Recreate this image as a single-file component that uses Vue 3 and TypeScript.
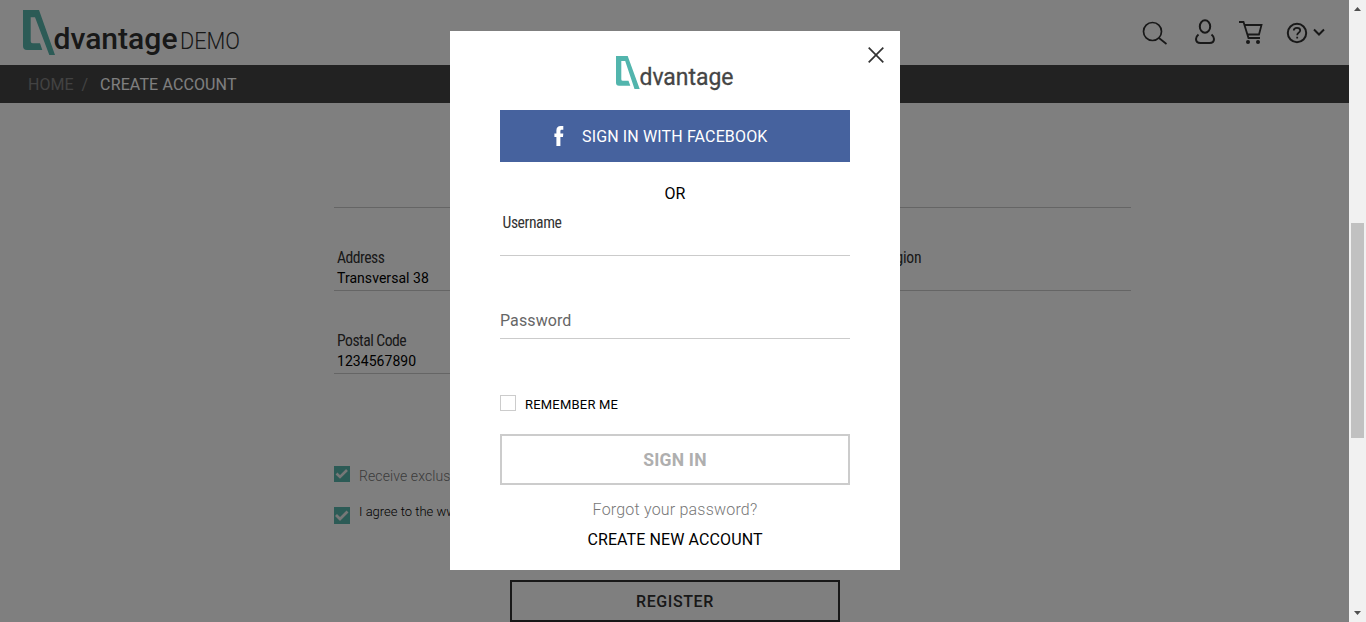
<script setup lang="ts">
import { ref } from 'vue'

interface Field {
  label: string
  value: string
}

const rows: Field[][] = [
  [{ label: '', value: '' }, { label: '', value: '' }],
  [{ label: 'Address', value: 'Transversal 38' }, { label: 'State / Province / Region', value: '' }],
  [{ label: 'Postal Code', value: '1234567890' }],
]

const remember = ref(false)
</script>

<template>
  <div class="window">
    <div class="page">
      <header class="top">
        <svg class="brand" width="230" height="60" viewBox="0 0 230 60">
          <path fill="#58b6ad" d="M3 10H19L35 55H29.300L15 17.300H10.700V41.300Q10.700 43.300 12.700 43.300H20L22.300 50H7Q3 50 3 46Z" />
          <text x="33.5" y="49" class="brand-name" textLength="124" lengthAdjust="spacingAndGlyphs">dvantage</text>
          <text x="160" y="49" class="brand-demo" textLength="60" lengthAdjust="spacingAndGlyphs">DEMO</text>
        </svg>
        <svg class="tools" width="190" height="40" viewBox="0 0 190 40" fill="none" stroke="#303030" stroke-width="2">
          <circle cx="12.5" cy="19.5" r="9" stroke-width="1.7" />
          <path d="M19 26L26.5 32" stroke-width="1.7" />
          <ellipse cx="65" cy="14.5" rx="5.2" ry="6.2" />
          <path d="M58.5 22.5Q56 24.500 56 27Q56 31 60.500 31H69.500Q74 31 74 27Q74 24.500 71.500 22.500" />
          <path d="M99 10H103.500L108.500 26H120M105 13H121.500L119 22.500H108" stroke-width="1.800" />
          <circle cx="108" cy="30" r="2" fill="#303030" stroke="none" />
          <circle cx="118" cy="30" r="2" fill="#303030" stroke="none" />
          <circle cx="157" cy="21" r="9.200" />
          <path d="M153.800 18.500Q153.800 15.800 157 15.800Q160.200 15.800 160.200 18.300Q160.200 19.700 158.600 20.800Q157.200 21.800 157.200 23.200M157.200 24.700V26.500" stroke-width="1.800" />
          <path d="M174 17.500L179 22.500L184 17.500" />
        </svg>
      </header>
      <nav class="crumbs">
        <span class="crumb-home">HOME</span><span class="crumb-sep">/</span><span class="crumb-here">CREATE ACCOUNT</span>
      </nav>
      <main class="form">
        <div v-for="(row, i) in rows" :key="i" class="row">
          <div v-for="(field, j) in row" :key="j" class="field">
            <span class="label">{{ field.label }}</span>
            <span class="value">{{ field.value }}</span>
          </div>
        </div>
        <div class="checks">
          <div class="check">
            <svg class="tick" width="16" height="16" viewBox="0 0 16 16"><rect width="16" height="16" fill="#58b6ad" /><path d="M2.500 7.500L6 11L13 4" fill="none" stroke="#eee" stroke-width="2.600" /></svg>
            <span class="offers">Receive exclusive offers</span>
          </div>
          <div class="check terms">
            <svg class="tick" width="16" height="17" viewBox="0 0 16 17"><rect width="16" height="17" fill="#58b6ad" /><path d="M2 8L6 12L13.500 4.500" fill="none" stroke="#eee" stroke-width="2.800" /></svg>
            <span class="agree">I agree to the www.</span>
          </div>
        </div>
        <button class="register">REGISTER</button>
      </main>
    </div>

    <div class="scroll">
      <svg width="17" height="17" viewBox="0 0 17 17"><path d="M5 11L8.500 7L12 11Z" fill="#505050" /></svg>
      <div class="track"><div class="thumb"></div></div>
      <svg width="17" height="17" viewBox="0 0 17 17"><path d="M5 6L8.500 10L12 6Z" fill="#505050" /></svg>
    </div>

    <div class="overlay">
      <section class="modal">
        <svg class="close" width="16" height="16" viewBox="0 0 16 16"><path d="M.7.7L15.300 15.300M15.300.7L.7 15.300" stroke="#333" stroke-width="1.700" /></svg>
        <svg class="modal-logo" width="120" height="40" viewBox="0 0 120 40">
          <path fill="#52b5ad" d="M1 3H12.700L24.700 36H19.500L10.200 8H6.300V26.200Q6.300 27.700 7.800 27.700H13.500L15.300 32.700H4Q1 32.700 1 29.700Z" />
          <text x="24.500" y="32" class="modal-name" textLength="94" lengthAdjust="spacingAndGlyphs">dvantage</text>
        </svg>
        <button class="facebook">
          <svg width="10" height="20" viewBox="0 0 10 20"><path fill="#fff" d="M2.400 20V11H.4V7.500H2.400V4.500Q2.400 0 6.700 0H9.300V3.700H7.600Q6.400 3.700 6.400 5V7.500H9.300L9 11H6.400V20Z" /></svg>
          <span>SIGN IN WITH FACEBOOK</span>
        </button>
        <p class="or">OR</p>
        <div class="input user"><span class="label">Username</span></div>
        <div class="input pass"><span>Password</span></div>
        <label class="remember" @click="remember = !remember"><span class="box"></span><span class="remember-text">REMEMBER ME</span></label>
        <button class="signin">SIGN IN</button>
        <a class="forgot">Forgot your password?</a>
        <a class="create">CREATE NEW ACCOUNT</a>
      </section>
    </div>
  </div>
</template>

<style>
body { overflow: hidden; }
</style>

<style scoped>
.window { position: relative; display: flex; width: 1366px; height: 622px; overflow: hidden; background: #fff; font-family: Roboto, "Liberation Sans", sans-serif; }
.page { width: 1349px; height: 622px; overflow: hidden; }
.top { display: flex; justify-content: space-between; height: 65px; padding: 0 19px 0 20px; box-sizing: border-box; }
.brand { overflow: visible; }
.brand-name { font-size: 29px; font-weight: 500; fill: #303030; }
.brand-demo { font-size: 23px; font-weight: 300; fill: #303030; }
.tools { margin-top: 12px; }
.crumbs { display: flex; align-items: center; height: 38px; padding-left: 28px; background: #444; color: #fff; font-size: 16px; box-sizing: border-box; white-space: nowrap; }
.crumb-home, .crumb-sep { color: #848484; }
.crumb-sep { margin: 0 12px 0 8px; }
.crumb-here { letter-spacing: .13px; }
.form { width: 797px; margin-left: 334px; padding-top: 22px; box-sizing: border-box; }
.row { display: grid; grid-template-columns: 362px 362px; justify-content: space-between; }
.field { display: flex; flex-direction: column; height: 83px; padding: 40px 0 0 3px; border-bottom: 1px solid #cbcbcb; box-sizing: border-box; }
.label { height: 20px; line-height: 20px; font-size: 15.7px; font-stretch: 75%; font-weight: 400; letter-spacing: -.42px; color: #333; }
.row .label { letter-spacing: -.52px; }
.row .field:nth-child(2) .label { letter-spacing: -.2px; }
.value { height: 21px; line-height: 21px; font-size: 14px; letter-spacing: .05px; color: #000; }
.checks { display: flex; flex-direction: column; padding-top: 92px; }
.check { display: flex; height: 20px; line-height: 20px; white-space: nowrap; gap: 9px; }
.terms { margin-top: 20px; }
.tick { flex: none; }
.offers { font-size: 14px; color: #777; font-weight: 300; letter-spacing: .1px; }
.agree { margin-top: -4px; font-size: 13px; font-weight: 300; color: #000; }
.terms .tick { margin-top: 1px; }
.register { display: block; width: 330px; height: 42px; margin: 54px 0 0 176px; border: 2px solid #303030; background: transparent; color: #303030; font: 500 16px Roboto, sans-serif; letter-spacing: .6px; }
.scroll { display: flex; flex-direction: column; width: 17px; height: 622px; background: #f1f1f1; }
.track { flex: 1; padding: 206px 2px 0; }
.thumb { height: 215px; background: #c1c1c1; }
.overlay { position: absolute; top: 0; left: 0; width: 1349px; height: 622px; background: rgba(0, 0, 0, .5); }
.modal { position: relative; display: flex; flex-direction: column; width: 450px; height: 539px; margin: 31px 0 0 450px; padding: 22px 50px 0; background: #fff; box-sizing: border-box; }
.close { position: absolute; top: 16px; right: 16px; }
.modal-logo { margin-left: 115px; overflow: visible; }
.modal-name { font-size: 23px; font-weight: 400; fill: #454545; stroke: #454545; stroke-width: .3px; }
.facebook { display: flex; align-items: center; gap: 18px; height: 52px; margin-top: 17px; padding: 0 0 0 54px; border: 0; background: #46629e; color: #fff; font: 400 16px Roboto, sans-serif; letter-spacing: .14px; }
.or { height: 20px; margin: 22px 0 0; line-height: 20px; text-align: center; color: #000; font-weight: 400; }
.input { display: flex; box-sizing: border-box; border-bottom: 1px solid #cbcbcb; font-size: 16px; }
.user { height: 52px; padding: 9px 0 0 2.5px; }
.pass { height: 83px; padding-top: 55px; line-height: 20px; letter-spacing: .1px; color: #666; }
.remember { display: flex; gap: 9px; height: 16px; margin-top: 56px; }
.box { width: 16px; height: 16px; border: 1px solid #ccc; box-sizing: border-box; }
.remember-text { margin-top: 2px; font-size: 13px; line-height: 16px; color: #000; letter-spacing: .2px; }
.signin { height: 51px; margin-top: 23px; border: 2px solid #ccc; background: #fff; color: #afafaf; font: 700 17.5px Roboto, sans-serif; letter-spacing: .2px; }
.forgot { margin-top: 15px; line-height: 20px; text-align: center; color: #777; font-weight: 300; letter-spacing: .2px; }
.create { margin-top: 10px; line-height: 20px; text-align: center; color: #000; font-weight: 400; letter-spacing: .1px; }
</style>
